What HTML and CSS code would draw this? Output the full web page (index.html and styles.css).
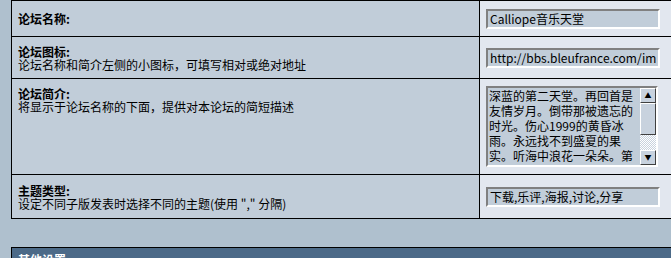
FILE: index.html
```html
<!DOCTYPE html>
<html lang="zh-CN">
<head>
<meta charset="UTF-8">
<title>论坛设置</title>
<link rel="stylesheet" href="styles.css">
</head>
<body>
<div class="page">
    <table class="settings first">
        <tr class="cut">
            <td class="alt1"></td>
            <td class="alt2"></td>
        </tr>
        <tr class="row-name">
            <td class="alt1"><b>论坛名称:</b></td>
            <td class="alt2"><input type="text" class="field" value="Calliope音乐天堂"></td>
        </tr>
        <tr class="row-icon">
            <td class="alt1"><b>论坛图标:</b><br>论坛名称和简介左侧的小图标，可填写相对或绝对地址</td>
            <td class="alt2"><input type="text" class="field" value="http://bbs.bleufrance.com/images/forum.gif"></td>
        </tr>
        <tr class="row-desc">
            <td class="alt1 top"><b>论坛简介:</b><br>将显示于论坛名称的下面，提供对本论坛的简短描述</td>
            <td class="alt2">
                <div class="memo">
                    <textarea class="memo-text" rows="5">深蓝的第二天堂。再回首是友情岁月。倒带那被遗忘的时光。伤心1999的黄昏冰雨。永远找不到盛夏的果实。听海中浪花一朵朵。第一次爱的人。</textarea>
                    <div class="scroll">
                        <div class="scroll-btn">&#9650;</div>
                        <div class="scroll-thumb"></div>
                        <div class="scroll-track"></div>
                        <div class="scroll-btn">&#9660;</div>
                    </div>
                </div>
            </td>
        </tr>
        <tr class="row-type">
            <td class="alt1"><b>主题类型:</b><br>设定不同子版发表时选择不同的主题(使用 "," 分隔)</td>
            <td class="alt2"><input type="text" class="field" value="下载,乐评,海报,讨论,分享"></td>
        </tr>
    </table>

    <table class="settings next">
        <tr>
            <td class="header">其他设置</td>
        </tr>
    </table>
</div>
</body>
</html>
```

FILE: styles.css
```css
html, body {
    margin: 0;
    padding: 0;
    overflow: hidden;
}
body {
    background-color: #afc0ce;
    font-family: "Noto Sans CJK SC", "DejaVu Sans", sans-serif;
    font-size: 12px;
    line-height: 13px;
    color: #000;
}
.page {
    padding-left: 11px;
    width: 700px;
}
.settings {
    border-collapse: collapse;
    width: 700px;
}
.settings td {
    border: 1px solid #000;
    padding: 0 6px;
    vertical-align: middle;
}
.settings td.top {
    vertical-align: top;
    padding-top: 8px;
}
.first {
    margin-top: -11px;
}
.settings .cut td {
    height: 10px;
}
.alt1 {
    background-color: #c1cdd9;
    width: 455px;
}
.alt2 {
    background-color: #e2e7ef;
}
.row-name td {
    height: 35px;
}
.row-icon td {
    height: 41px;
}
.row-desc td {
    height: 95px;
}
.row-desc td.top {
    height: auto;
}
.row-type td {
    height: 43px;
}
b {
    font-weight: bold;
}
.field {
    display: block;
    box-sizing: border-box;
    width: 174px;
    height: 20px;
    margin: 0;
    padding: 0 2px;
    background-color: #c1cdd9;
    border: 2px solid;
    border-color: #808080 #fff #fff #808080;
    font-family: "Noto Sans CJK SC", "DejaVu Sans", sans-serif;
    font-size: 12px;
    color: #000;
    outline: none;
}
.memo {
    display: flex;
    box-sizing: border-box;
    width: 172px;
    height: 81px;
    background-color: #c1cdd9;
    border: 2px solid;
    border-color: #808080 #fff #fff #808080;
}
.memo-text {
    flex: 1;
    margin: 0;
    padding: 0 0 0 1px;
    border: none;
    background: transparent;
    font-family: "Noto Sans CJK SC", "DejaVu Sans", sans-serif;
    font-size: 12px;
    line-height: 15px;
    color: #000;
    resize: none;
    overflow: hidden;
    outline: none;
}
.scroll {
    display: flex;
    flex-direction: column;
    width: 16px;
}
.scroll-btn {
    height: 15px;
    box-sizing: border-box;
    background-color: #c8d2de;
    border: 1px solid;
    border-color: #fff #404040 #404040 #fff;
    font-size: 7px;
    line-height: 13px;
    text-align: center;
}
.scroll-thumb {
    height: 32px;
    box-sizing: border-box;
    background-color: #c8d2de;
    border: 1px solid;
    border-color: #fff #404040 #404040 #fff;
}
.scroll-track {
    flex: 1;
    background-image: repeating-conic-gradient(#fff 0 25%, #c8d2de 0 50%);
    background-size: 2px 2px;
}
.next {
    margin-top: 28px;
}
.settings td.header {
    background-color: #4c6a88;
    color: #fff;
    font-weight: bold;
    height: 28px;
    vertical-align: top;
    padding-top: 5px;
}
```
